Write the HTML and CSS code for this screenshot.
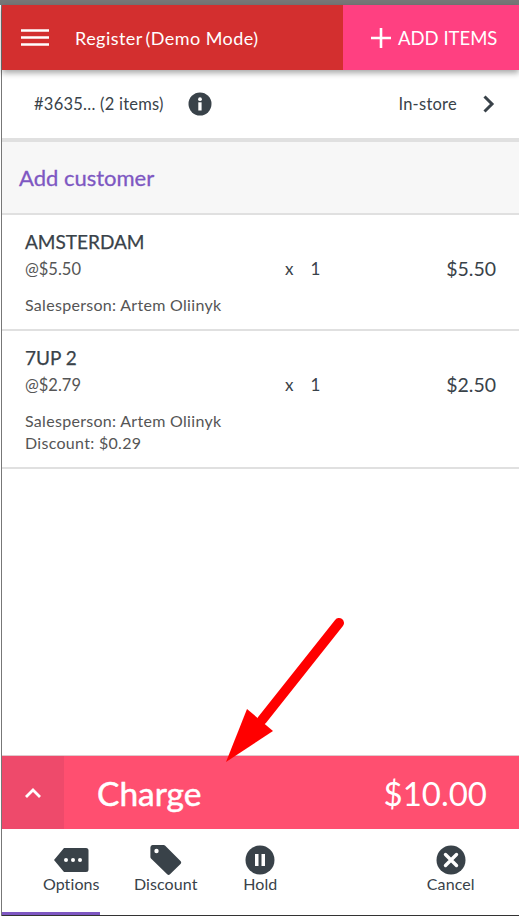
FILE: index.html
```html
<!DOCTYPE html>
<html lang="en">
<head>
<meta charset="utf-8">
<title>Register</title>
<link rel="stylesheet" href="styles.css">
</head>
<body>
<div class="screen">
  <div class="topstrip"></div>
  <div class="app">
    <header class="header">
      <svg class="menu" width="28" height="18" viewBox="0 0 28 18"><path d="M0 1.500h28M0 8.500h28M0 15.500h28" stroke="#fff" stroke-width="2.600"/></svg>
      <div class="title">Register<span class="thin"> </span>(Demo Mode)</div>
      <div class="add">
        <svg width="20" height="20" viewBox="0 0 20 20"><path d="M10 0v20M0 10h20" stroke="#fff" stroke-width="2.600"/></svg>
        <span>ADD ITEMS</span>
      </div>
    </header>
    <section class="order">
      <span class="order-id">#3635... (2 items)</span>
      <svg class="info" width="24" height="24" viewBox="0 0 24 24"><circle cx="12" cy="12" r="11.500" fill="#394249"/><circle cx="12" cy="7.200" r="1.900" fill="#fff"/><path d="M10.300 10.300h3.300v8.200h-3.300z" fill="#fff"/></svg>
      <span class="order-type">In-store</span>
      <svg class="chev" width="14" height="18" viewBox="0 0 14 18"><path d="M2.500 1.500L10 9l-7.500 7.500" fill="none" stroke="#394249" stroke-width="3"/></svg>
    </section>
    <section class="customer">Add customer</section>
    <section class="items">
      <article class="item">
        <div class="name">AMSTERDAM</div>
        <div class="line">
          <span class="unit">@$5.50</span>
          <span class="qty"><span class="x">x</span><span>1</span></span>
          <span class="price">$5.50</span>
        </div>
        <div class="meta">Salesperson: Artem Oliinyk</div>
      </article>
      <article class="item">
        <div class="name">7UP 2</div>
        <div class="line">
          <span class="unit">@$2.79</span>
          <span class="qty"><span class="x">x</span><span>1</span></span>
          <span class="price">$2.50</span>
        </div>
        <div class="meta">Salesperson: Artem Oliinyk<br>Discount: $0.29</div>
      </article>
    </section>
    <section class="charge">
      <div class="toggle">
        <svg width="18" height="12" viewBox="0 0 18 12"><path d="M2 10l7-7 7 7" fill="none" stroke="#fff" stroke-width="2.800"/></svg>
      </div>
      <div class="charge-label">Charge</div>
      <div class="charge-total">$10.00</div>
    </section>
    <nav class="actions">
      <div class="action">
        <svg width="36" height="26" viewBox="0 0 36 26"><path d="M11 1h22a2.500 2.500 0 0 1 2.500 2.500v19A2.500 2.500 0 0 1 33 25H11L1 13z" fill="#394249"/><circle cx="13" cy="13" r="2" fill="#fff"/><circle cx="20" cy="13" r="2" fill="#fff"/><circle cx="27" cy="13" r="2" fill="#fff"/></svg>
        <span>Options</span>
      </div>
      <div class="action">
        <svg width="32" height="30" viewBox="0 0 32 30"><path d="M2.500 0h11a2 2 0 0 1 1.500.6l15.500 15.500a2 2 0 0 1 0 2.800L20 29.300a2 2 0 0 1-2.800 0L1 13.500a2 2 0 0 1-.6-1.500V2.500A2.500 2.500 0 0 1 2.500 0z" fill="#394249"/><circle cx="6.500" cy="6" r="2.200" fill="#fff"/></svg>
        <span>Discount</span>
      </div>
      <div class="action">
        <svg width="30" height="30" viewBox="0 0 30 30"><circle cx="15" cy="15" r="14.500" fill="#394249"/><path d="M10 9h3.500v12H10zM16.500 9H20v12h-3.500z" fill="#fff"/></svg>
        <span>Hold</span>
      </div>
      <div class="action action-end">
        <svg width="30" height="30" viewBox="0 0 30 30"><circle cx="15" cy="15" r="14.500" fill="#394249"/><path d="M9.500 9.500l11 11M20.500 9.500l-11 11" stroke="#fff" stroke-width="3.400" stroke-linecap="round"/></svg>
        <span>Cancel</span>
      </div>
      <div class="tab-bar"></div>
    </nav>
  </div>
  <svg class="arrow" width="140" height="160" viewBox="0 0 140 160"><path d="M134 11L57 108" stroke="#f00" stroke-width="10" stroke-linecap="round" fill="none"/><path d="M21 150L42 97L68 119z" fill="#f00"/></svg>
</div>
</body>
</html>
```

FILE: styles.css
```css
* { box-sizing: border-box; }
html, body { margin: 0; padding: 0; }
body { width: 519px; height: 916px; overflow: hidden; background: #fff; font-family: "Lato", "Open Sans", sans-serif; color: #394249; }
.screen { position: relative; width: 519px; height: 916px; display: flex; flex-direction: column; }
.topstrip { height: 5px; background: #777; flex: none; }
.app { flex: 1; display: flex; flex-direction: column; margin-left: 1px; border-left: 1px solid #777; min-height: 0; }
.header { height: 65px; flex: none; display: flex; align-items: center; background: #d32f2f; color: #fff; box-shadow: 0 3px 6px rgba(0,0,0,.35); position: relative; z-index: 1; padding-left: 19px; }
.menu { flex: none; }
.title { margin-left: 26px; font-size: 18px; letter-spacing: .45px; flex: 1; white-space: nowrap; }
.thin { font-size: 9px; }
.add { width: 176px; height: 100%; background: #ff4081; display: flex; align-items: center; gap: 7px; padding-left: 28px; font-size: 18.500px; }
.add svg { flex: none; }
.order { height: 72px; flex: none; display: flex; align-items: center; padding-left: 32px; border-bottom: 4px solid #e0e0e0; font-size: 16.500px; letter-spacing: .25px; }
.order-id { width: 154px; }
.info { flex: none; }
.order-type { margin-left: auto; }
.chev { margin-left: 25px; margin-right: 23px; flex: none; }
.customer { height: 73px; flex: none; display: flex; align-items: center; padding-left: 17px; background: #f7f7f7; border-bottom: 2px solid #e0e0e0; color: #7e57c2; font-size: 22px; -webkit-text-stroke: .3px #7e57c2; }
.items { flex: 1; min-height: 0; }
.item { padding: 14px 23px 13px 23px; border-bottom: 2px solid #e0e0e0; }
.name { font-size: 19px; line-height: 26px; -webkit-text-stroke: .25px #394249; }
.line { display: flex; align-items: center; height: 27px; font-size: 16.500px; }
.unit { width: 260px; color: #555; }
.qty { display: flex; gap: 17px; font-size: 17px; }
.price { margin-left: auto; font-size: 19.500px; }
.meta { font-size: 16px; letter-spacing: .3px; line-height: 22px; margin-top: 12px; color: #555; }
.charge { height: 74px; flex: none; display: flex; align-items: center; background: #ff4f70; color: #fff; border-top: 1px solid #e0c8cc; }
.toggle { width: 62px; height: 100%; background: #ee4a6b; display: flex; align-items: center; justify-content: center; }
.charge-label { margin-left: 33px; font-size: 33.500px; -webkit-text-stroke: .5px #fff; flex: 1; }
.charge-total { margin-right: 32px; font-size: 33px; }
.actions { height: 87px; flex: none; position: relative; display: flex; padding-left: 22px; padding-right: 21px; font-size: 16px; letter-spacing: .1px; border-bottom: 1px solid #333; }
.action { display: flex; flex-direction: column; align-items: center; flex: none; width: 94.500px; padding-top: 16px; }
.action svg { height: 30px; }
.action span { margin-top: -1px; }
.action-end { margin-left: auto; }
.tab-bar { position: absolute; left: 0; bottom: 0; width: 98px; height: 3px; background: #7e57c2; }
.arrow { position: absolute; left: 205px; top: 612px; z-index: 3; }
```
